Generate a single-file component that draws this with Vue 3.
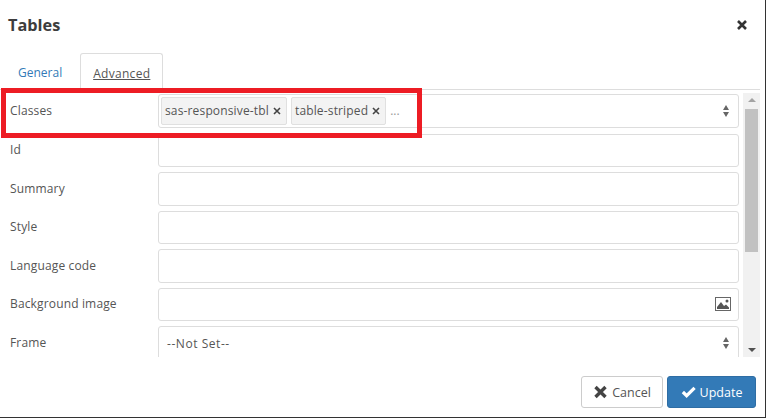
<template>
  <div class="dialog">
    <header class="head">
      <h1 class="title">Tables</h1>
      <svg class="close" viewBox="0 0 12 12" aria-label="Close">
        <path d="M2 2 L10 10 M10 2 L2 10" />
      </svg>
    </header>

    <nav class="tabs">
      <a class="tab">General</a>
      <a class="tab active">Advanced</a>
    </nav>

    <div class="body">
      <div class="form">
        <div class="row first">
          <label class="label">Classes</label>
          <div class="field">
            <span v-for="tag in tags" :key="tag" class="tag">
              {{ tag }}
              <svg class="tag-x" viewBox="0 0 8 8"><path d="M1 1 L7 7 M7 1 L1 7" /></svg>
            </span>
            <span class="more">...</span>
            <span class="spinner"><i class="up"></i><i class="down"></i></span>
          </div>
        </div>
        <div v-for="item in rows" :key="item.label" class="row">
          <label class="label">{{ item.label }}</label>
          <div class="field">
            <span v-if="item.value" class="value">{{ item.value }}</span>
            <svg v-if="item.image" class="pic" viewBox="0 0 16 14">
              <rect x="0.5" y="0.5" width="15" height="13" fill="#fff" stroke="#666" />
              <circle cx="12" cy="4" r="1.5" fill="#555" />
              <path d="M2 12 V10 L6 5 L9 9 L11 7.5 L14 10.5 V12 Z" fill="#555" />
            </svg>
            <span v-if="item.select" class="spinner"><i class="up"></i><i class="down"></i></span>
          </div>
        </div>
      </div>
      <div class="scrollbar">
        <i class="arrow-up"></i>
        <div class="track"><div class="thumb"></div></div>
        <i class="arrow-down"></i>
      </div>
    </div>

    <footer class="foot">
      <button class="btn cancel">
        <svg class="btn-icon" viewBox="0 0 14 14"><path d="M2 2 L12 12 M12 2 L2 12" /></svg>
        Cancel
      </button>
      <button class="btn update">
        <svg class="btn-icon" viewBox="0 0 16 14"><path d="M2 7 L6 11 L14.5 2.5" /></svg>
        Update
      </button>
    </footer>

    <div class="highlight"></div>
  </div>
</template>

<script setup>
const tags = ['sas-responsive-tbl', 'table-striped']

const rows = [
  { label: 'Id' },
  { label: 'Summary' },
  { label: 'Style' },
  { label: 'Language code' },
  { label: 'Background image', image: true },
  { label: 'Frame', value: '--Not Set--', select: true },
]
</script>

<style>
html,
body {
  margin: 0;
  background: #fff;
}
</style>

<style scoped>
.dialog {
  position: relative;
  width: 766px;
  height: 418px;
  box-sizing: border-box;
  background: #fff;
  border-right: 1px solid #333;
  border-bottom: 1px solid #333;
  font-family: "Open Sans", sans-serif;
  font-size: 12px;
  color: #555;
  overflow: hidden;
  display: flex;
  flex-direction: column;
}

.head {
  height: 53px;
  flex: none;
  display: flex;
  align-items: center;
  justify-content: space-between;
  padding: 0 17px 3px 8px;
  box-sizing: border-box;
}

.title {
  margin: 0;
  font-size: 16.3px;
  font-weight: 700;
  color: #3d3d3d;
}

.close {
  width: 12px;
  height: 12px;
  fill: none;
  stroke: #333;
  stroke-width: 2.6;
}

.tabs {
  height: 36px;
  flex: none;
  display: flex;
  padding-left: 4px;
  margin-right: 5px;
  border-bottom: 1px solid #ddd;
  box-sizing: content-box;
}

.tab {
  box-sizing: border-box;
  height: 37px;
  padding: 11px 13px 0 14px;
  color: #337ab7;
  line-height: 17px;
}

.tab.active {
  margin-left: 5px;
  padding: 11px 12px 0 12px;
  letter-spacing: 0.3px;
  color: #555;
  background: #fff;
  border: 1px solid #ddd;
  border-bottom-color: #fff;
  border-radius: 3px 3px 0 0;
  text-decoration: underline;
}

.body {
  height: 267px;
  flex: none;
  display: flex;
  padding-top: 4px;
  padding-right: 5px;
  box-sizing: border-box;
  overflow: hidden;
}

.form {
  flex: 1;
  min-width: 0;
  display: flex;
  flex-direction: column;
  gap: 5px;
}

.row {
  flex: none;
  height: 33.5px;
  display: flex;
  align-items: center;
}

.row.first {
  margin-bottom: 1.1px;
}

.label {
  width: 158px;
  flex: none;
  padding: 0 0 1px 10px;
  box-sizing: border-box;
  letter-spacing: 0.15px;
}

.field {
  width: 581px;
  height: 100%;
  flex: none;
  box-sizing: border-box;
  border: 1px solid #ddd;
  border-radius: 3px;
  display: flex;
  align-items: center;
  gap: 4px;
  padding: 0 9px 0 2px;
}

.tag {
  display: flex;
  align-items: center;
  gap: 4px;
  height: 28px;
  padding: 0 5px 0 3px;
  box-sizing: border-box;
  background: #f3f3f3;
  border: 1px solid #e0e0e0;
  border-radius: 2px;
  color: #555;
  letter-spacing: 0.15px;
}

.tag-x {
  width: 8px;
  height: 8px;
  fill: none;
  stroke: #444;
  stroke-width: 1.6;
}

.more {
  margin-left: 0;
  color: #999;
}

.value {
  padding: 1px 0 0 6px;
  letter-spacing: 0.55px;
}

.spinner {
  margin-left: auto;
  display: flex;
  flex-direction: column;
  gap: 2px;
}

.up,
.down {
  width: 0;
  height: 0;
  border-left: 3px solid transparent;
  border-right: 3px solid transparent;
}

.up {
  border-bottom: 5px solid #666;
}

.down {
  border-top: 5px solid #666;
}

.pic {
  margin-left: auto;
  margin-right: -2px;
  width: 16px;
  height: 14px;
}

.scrollbar {
  width: 17px;
  margin-left: 5px;
  background: #f1f1f1;
  display: flex;
  flex-direction: column;
  align-items: center;
  margin-top: -1px;
}

.track {
  flex: 1;
  width: 100%;
  padding-top: 2px;
}

.thumb {
  width: 13px;
  height: 143px;
  margin: 0 auto;
  background: #c1c1c1;
}

.arrow-up,
.arrow-down {
  flex: none;
  width: 0;
  height: 0;
  border-left: 4px solid transparent;
  border-right: 4px solid transparent;
  margin: 5px 0;
}

.arrow-up {
  border-bottom: 4px solid #a3a3a3;
}

.arrow-down {
  border-top: 4px solid #505050;
}

.foot {
  flex: 1;
  display: flex;
  justify-content: flex-end;
  align-items: flex-start;
  gap: 4px;
  padding: 19px 9px 0 0;
}

.btn {
  height: 32px;
  box-sizing: border-box;
  display: flex;
  align-items: center;
  justify-content: center;
  gap: 4px;
  font: inherit;
  font-size: 12.5px;
  border-radius: 3px;
  padding: 0;
}

.cancel {
  width: 82px;
  background: #fff;
  border: 1px solid #ccc;
  color: #555;
}

.update {
  width: 89px;
  background: #337ab7;
  border: 1px solid #2e6da4;
  color: #fff;
}

.btn-icon {
  width: 15px;
  height: 14px;
  fill: none;
  stroke-width: 3.4;
}

.cancel .btn-icon {
  stroke: #444;
}

.update .btn-icon {
  stroke: #fff;
}

.highlight {
  position: absolute;
  left: 1px;
  top: 88px;
  width: 421px;
  height: 50px;
  box-sizing: border-box;
  border: 5px solid #ed1c24;
  pointer-events: none;
}
</style>
